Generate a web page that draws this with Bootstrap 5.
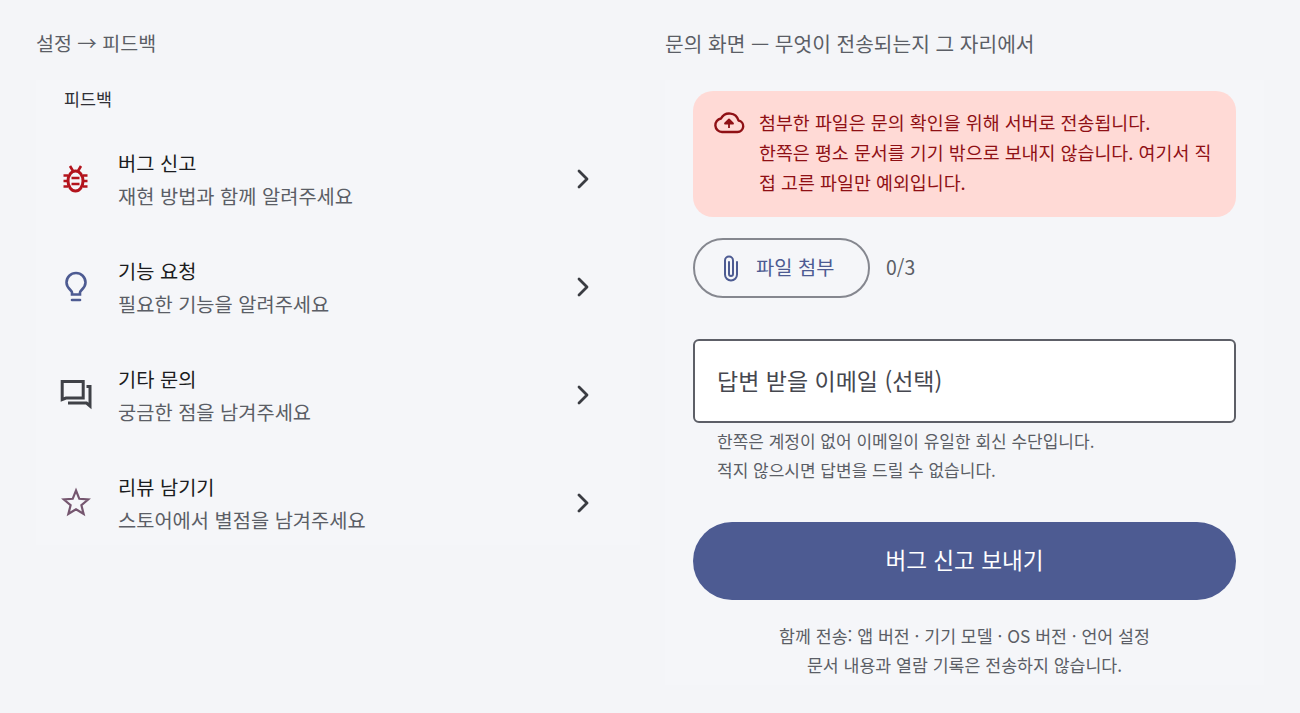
<!DOCTYPE html>
<html lang="ko">
<head>
<meta charset="utf-8">
<title>피드백</title>
<link href="https://cdn.jsdelivr.net/npm/bootstrap@5.3.0/dist/css/bootstrap.min.css" rel="stylesheet">
<style>
html,body{height:100%}
body{background:#f4f5f8;font-family:"Noto Sans CJK KR","Noto Sans",sans-serif;overflow:hidden;color:#1b1c20}
.stage{width:1300px;height:713px;padding:29px 36px 0;gap:25px}
.pane-l{width:604px}
.pane-r{width:599px}
.cap{font-size:20px;line-height:28px;color:#5b5e66;margin-bottom:23px}
.cap-l{font-size:19.5px}
.cap-r{font-size:20.3px}
.sheet{background:#f5f6f9}
.sheet-l{height:465px;padding:7px 0 0 28px}
.sec{font-size:17.400px;line-height:24px;color:#2f3036}
.fb-list{margin-top:26px;gap:24px}
.fb-item{height:84px;margin-left:-28px;padding:0 45px 0 24px;background:transparent;border:0}
.ico{width:32px;height:32px;flex:none}
.fb-txt{margin-left:26px;flex:1;padding-bottom:1px}
.fb-t{font-size:19.800px;line-height:28px;color:#1b1c20}
.fb-s{font-size:19.800px;line-height:27px;color:#5b5e66;margin-top:5px}
.sheet-r{height:605px;padding:11px 28px 0}
.warn{background:#ffdad6;color:#8f1015;border-radius:20px;height:126px;padding:16px 20px 0 20px;gap:14px;font-size:18.400px;line-height:30px}
.warn svg{width:32px;height:32px;flex:none}
.attach-row{margin-top:21px;gap:16px}
.attach{width:177px;height:60px;border:2px solid #85878f;border-radius:30px;color:#4d5b92;font-size:19.800px;gap:11px;background:transparent;padding:0 0 0 22px}
.attach svg{width:28px;height:28px;flex:none}
.attach span{padding-bottom:2px}
.cnt{font-size:19.400px;color:#5b5e66;margin-bottom:3px}
.mail{margin-top:41px;height:84px;border:2px solid #5d5f67;border-radius:6px;background:#fff;color:#45474f;font-size:23px;padding:0 22px 2px}
.hint{font-size:17px;line-height:29px;color:#5b5e66;padding:3px 24px 0}
.send{margin-top:38px;height:78px;width:100%;border-radius:39px;background:#4d5b92;border:0;color:#fff;font-size:22.600px;padding:0 0 3px}
.foot{font-size:17.300px;line-height:29px;color:#5b5e66;margin-top:21px}
</style>
</head>
<body>
<div class="stage d-flex">
  <div class="pane-l">
    <div class="cap cap-l">설정 → 피드백</div>
    <div class="sheet sheet-l">
      <div class="sec">피드백</div>
      <div class="fb-list d-flex flex-column">
        <div class="fb-item d-flex align-items-center">
          <svg class="ico" viewBox="0 0 32 32" fill="none" stroke="#b3141d" stroke-width="2.600" stroke-linecap="butt"><ellipse cx="15.500" cy="18" rx="7.500" ry="10" stroke-width="3"/><path d="M10 3l3 5M21 3l-3 5M11.500 15h8M11.500 21h8M3.500 12.500h4.500M23 12.500h4.500M3.500 18h4.500M23 18h4.500M3.500 23.500h4.500M23 23.500h4.500"/></svg>
          <div class="fb-txt"><div class="fb-t">버그 신고</div><div class="fb-s">재현 방법과 함께 알려주세요</div></div>
          <svg width="24" height="24" viewBox="0 0 24 24" fill="none" stroke="#3a3c42" stroke-width="2.8" stroke-linecap="round" stroke-linejoin="round"><path d="M8 4l8 8-8 8"/></svg>
        </div>
        <div class="fb-item d-flex align-items-center">
          <svg class="ico" viewBox="0 0 32 32" fill="none" stroke="#4d5b92" stroke-width="2.600" stroke-linecap="round"><path d="M12 23.500v-2c0-2.300-5.500-4.300-5.500-10a9.500 9.500 0 0 1 19 0c0 5.700-5.500 7.700-5.500 10v2z"/><path d="M12 29h8"/></svg>
          <div class="fb-txt"><div class="fb-t">기능 요청</div><div class="fb-s">필요한 기능을 알려주세요</div></div>
          <svg width="24" height="24" viewBox="0 0 24 24" fill="none" stroke="#3a3c42" stroke-width="2.8" stroke-linecap="round" stroke-linejoin="round"><path d="M8 4l8 8-8 8"/></svg>
        </div>
        <div class="fb-item d-flex align-items-center">
          <svg class="ico" viewBox="0 0 32 32" fill="none" stroke="#3f4147" stroke-width="3" stroke-linejoin="miter"><path d="M2.200 2.500h21v16.500H6l-3.800 1.500z"/><path d="M8 24h18.500l3.500 3V7.500h-3.500"/></svg>
          <div class="fb-txt"><div class="fb-t">기타 문의</div><div class="fb-s">궁금한 점을 남겨주세요</div></div>
          <svg width="24" height="24" viewBox="0 0 24 24" fill="none" stroke="#3a3c42" stroke-width="2.8" stroke-linecap="round" stroke-linejoin="round"><path d="M8 4l8 8-8 8"/></svg>
        </div>
        <div class="fb-item d-flex align-items-center">
          <svg class="ico" viewBox="0 0 32 32" fill="none" stroke="#75566f" stroke-width="2.200" stroke-linejoin="miter"><path d="M16 3.500l3.300 8.300 8.900.7-6.800 5.700 2.200 8.700-7.600-4.700-7.600 4.700 2.200-8.700-6.800-5.700 8.900-.7z"/></svg>
          <div class="fb-txt"><div class="fb-t">리뷰 남기기</div><div class="fb-s">스토어에서 별점을 남겨주세요</div></div>
          <svg width="24" height="24" viewBox="0 0 24 24" fill="none" stroke="#3a3c42" stroke-width="2.8" stroke-linecap="round" stroke-linejoin="round"><path d="M8 4l8 8-8 8"/></svg>
        </div>
      </div>
    </div>
  </div>
  <div class="pane-r">
    <div class="cap cap-r">문의 화면 — 무엇이 전송되는지 그 자리에서</div>
    <div class="sheet sheet-r">
      <div class="warn d-flex">
        <svg viewBox="0 0 32 32" fill="none" stroke="#8f1015" stroke-width="2.400" stroke-linejoin="round"><path d="M9 25h15.500a5.800 5.800 0 0 0 1-11.500A9.500 9.500 0 0 0 8 11.500 6.800 6.800 0 0 0 9 25z"/><path d="M16 21v-8M12 16.500l4-4 4 4z" fill="#8f1015" stroke-width="1.800"/></svg>
        <div>첨부한 파일은 문의 확인을 위해 서버로 전송됩니다.<br>한쪽은 평소 문서를 기기 밖으로 보내지 않습니다. 여기서 직접 고른 파일만 예외입니다.</div>
      </div>
      <div class="attach-row d-flex align-items-center">
        <button type="button" class="attach btn d-flex align-items-center">
          <svg viewBox="0 0 28 28" fill="none" stroke="#4d5b92" stroke-width="2" stroke-linecap="round"><path d="M20 8v12.500a6 6 0 0 1-12 0V6.500a4 4 0 0 1 8 0V20a2 2 0 0 1-4 0V8"/></svg>
          <span>파일 첨부</span>
        </button>
        <span class="cnt">0/3</span>
      </div>
      <div class="mail d-flex align-items-center">답변 받을 이메일 (선택)</div>
      <div class="hint">한쪽은 계정이 없어 이메일이 유일한 회신 수단입니다.<br>적지 않으시면 답변을 드릴 수 없습니다.</div>
      <button type="button" class="send btn">버그 신고 보내기</button>
      <div class="foot text-center">함께 전송: 앱 버전 · 기기 모델 · OS 버전 · 언어 설정<br>문서 내용과 열람 기록은 전송하지 않습니다.</div>
    </div>
  </div>
</div>
<script src="https://cdn.jsdelivr.net/npm/bootstrap@5.3.0/dist/js/bootstrap.bundle.min.js"></script>
</body>
</html>
